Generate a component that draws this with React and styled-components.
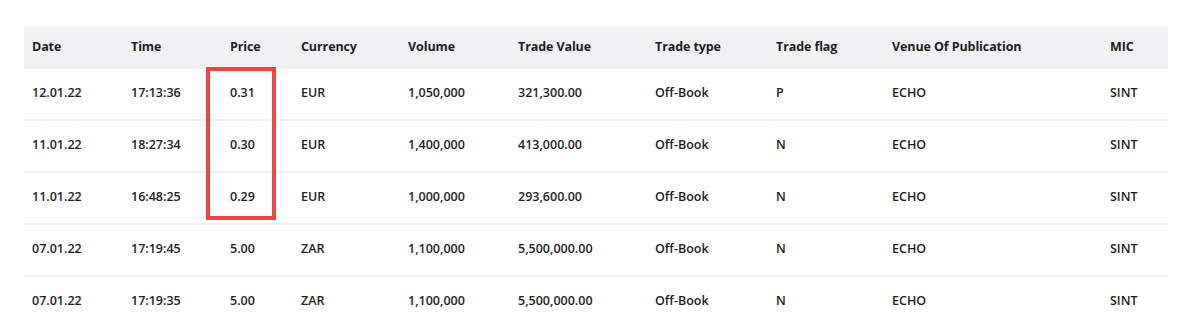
import React from 'react'
import styled, { createGlobalStyle } from 'styled-components'

const GlobalStyle = createGlobalStyle`
  body {
    margin: 0;
    background: #fff;
    font-family: "Open Sans", "Noto Sans", sans-serif;
    color: #1d1d22;
  }
`

const Page = styled.div`
  padding: 26px 12px 0 24px;
`

const Wrap = styled.div`
  position: relative;
`

const Table = styled.table`
  width: 1144px;
  border-collapse: collapse;
  table-layout: fixed;
  font-size: 12.5px;
`

const Head = styled.th`
  background: #f1f1f3;
  height: 41px;
  padding: 0 0 2px 8px;
  text-align: left;
  font-weight: 700;
  letter-spacing: -0.1px;
`

const Row = styled.tr`
  border-bottom: ${p => (p.last ? 'none' : '2px solid #f0f0f2')};
`

const Cell = styled.td`
  height: 47px;
  padding: 0 0 3px 8px;
  font-weight: 600;
  letter-spacing: 0;
`

const Highlight = styled.div`
  position: absolute;
  left: 182px;
  top: 41px;
  width: 62px;
  height: 145px;
  border: 4px solid #f24444;
`

const cols = [
  ['Date', 99],
  ['Time', 99],
  ['Price', 71],
  ['Currency', 107],
  ['Volume', 110],
  ['Trade Value', 137],
  ['Trade type', 121],
  ['Trade flag', 116],
  ['Venue Of Publication', 218],
  ['MIC', 66],
]

const trades = [
  ['12.01.22', '17:13:36', '0.31', 'EUR', '1,050,000', '321,300.00', 'Off-Book', 'P', 'ECHO', 'SINT'],
  ['11.01.22', '18:27:34', '0.30', 'EUR', '1,400,000', '413,000.00', 'Off-Book', 'N', 'ECHO', 'SINT'],
  ['11.01.22', '16:48:25', '0.29', 'EUR', '1,000,000', '293,600.00', 'Off-Book', 'N', 'ECHO', 'SINT'],
  ['07.01.22', '17:19:45', '5.00', 'ZAR', '1,100,000', '5,500,000.00', 'Off-Book', 'N', 'ECHO', 'SINT'],
  ['07.01.22', '17:19:35', '5.00', 'ZAR', '1,100,000', '5,500,000.00', 'Off-Book', 'N', 'ECHO', 'SINT'],
]

export default function App() {
  return (
    <>
      <GlobalStyle />
      <Page>
        <Wrap>
          <Table>
            <colgroup>
              {cols.map(([name, w]) => (
                <col key={name} style={{ width: w }} />
              ))}
            </colgroup>
            <thead>
              <tr>
                {cols.map(([name]) => (
                  <Head key={name}>{name}</Head>
                ))}
              </tr>
            </thead>
            <tbody>
              {trades.map((t, i) => (
                <Row key={i} last={i === trades.length - 1}>
                  {t.map((v, j) => (
                    <Cell key={j}>{v}</Cell>
                  ))}
                </Row>
              ))}
            </tbody>
          </Table>
          <Highlight />
        </Wrap>
      </Page>
    </>
  )
}
